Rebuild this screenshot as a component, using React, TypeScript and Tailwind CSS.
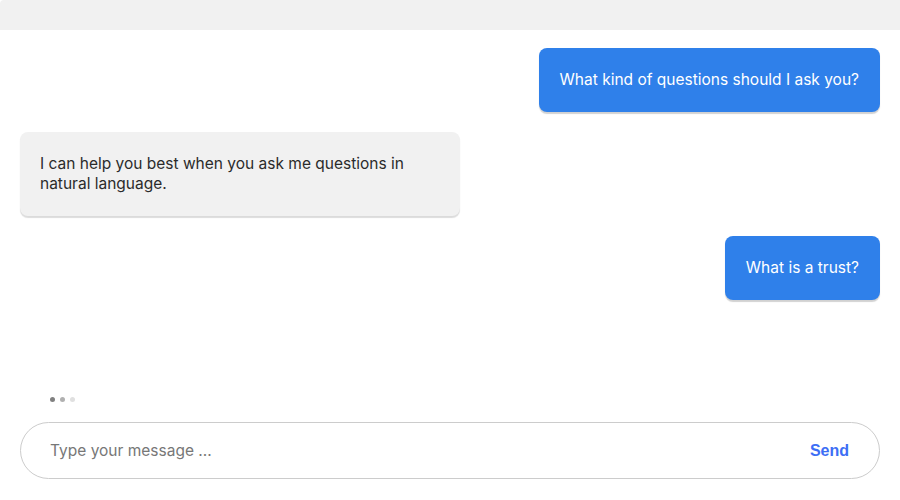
const font = { fontFamily: "Inter, 'Noto Sans', sans-serif" };

interface messageProps {
  from: "user" | "bot";
  text: string;
}

const messages: messageProps[] = [
  { from: "user", text: "What kind of questions should I ask you?" },
  {
    from: "bot",
    text: "I can help you best when you ask me questions in natural language.",
  },
  { from: "user", text: "What is a trust?" },
];

function Bubble({ from, text }: messageProps) {
  if (from === "user") {
    return (
      <div className="flex justify-end">
        <div className="rounded-lg bg-[#2f80ea] px-[21px] py-[22px] text-[15.5px] leading-[20px] text-white shadow-[0_2px_1px_rgba(0,0,0,0.18)]">
          {text}
        </div>
      </div>
    );
  }
  return (
    <div className="flex justify-start">
      <div className="w-[440px] rounded-lg bg-[#f1f1f1] px-5 py-[22px] text-[15.5px] leading-[20px] text-[#2b2b2b] shadow-[0_2px_1px_rgba(0,0,0,0.14)]">
        {text}
      </div>
    </div>
  );
}

export default function App() {
  return (
    <div className="flex h-[500px] w-[900px] flex-col bg-white" style={font}>
      <div className="h-[30px] rounded-tl-[4px] bg-[#f1f1f1]" />
      <div className="flex flex-1 flex-col gap-[20px] px-5 pt-[18px]">
        {messages.map((m, i) => (
          <Bubble key={i} from={m.from} text={m.text} />
        ))}
      </div>
      <div className="flex gap-[5px] px-[50px] pb-[20px]">
        <span className="h-[5px] w-[5px] rounded-full bg-[#808080]" />
        <span className="h-[5px] w-[5px] rounded-full bg-[#b0b0b0]" />
        <span className="h-[5px] w-[5px] rounded-full bg-[#e0e0e0]" />
      </div>
      <div className="px-5 pb-[21px]">
        <div className="flex h-[57px] items-center rounded-full border border-[#cccccc] pl-[29px] pr-[30px]">
          <input
            className="flex-1 bg-transparent text-[15.5px] text-[#333] outline-none placeholder:text-[#777]"
            placeholder="Type your message ..."
          />
          <button
            className="text-[16px] font-bold text-[#3d6ef5]"
            style={{ fontFamily: "'Liberation Sans', Arial, sans-serif" }}
          >
            Send
          </button>
        </div>
      </div>
    </div>
  );
}
